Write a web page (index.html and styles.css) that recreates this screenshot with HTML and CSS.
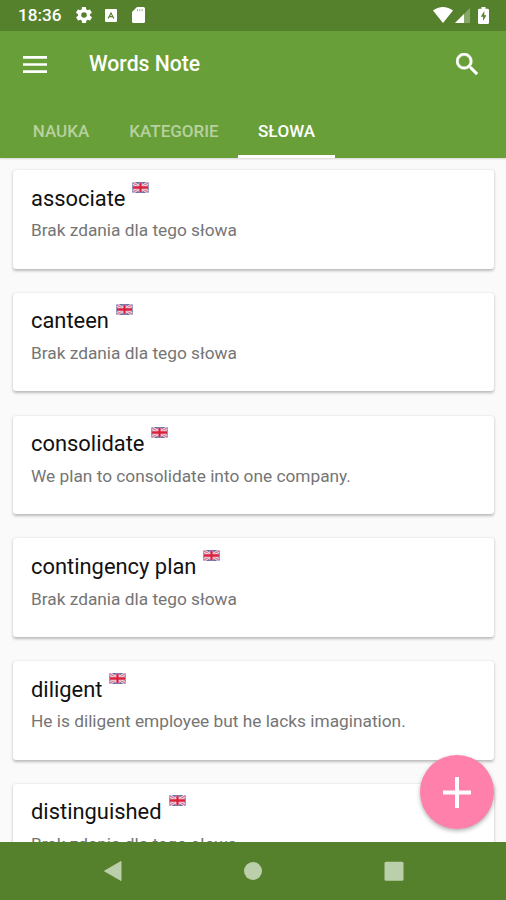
FILE: index.html
```html
<!DOCTYPE html>
<html lang="pl">
<head>
<meta charset="utf-8">
<title>Words Note</title>
<link rel="stylesheet" href="styles.css">
</head>
<body>
<svg width="0" height="0" class="defs">
  <symbol id="flag" viewBox="0 0 18 12">
    <rect width="18" height="12" rx="1.5" fill="#5f70aa"/>
    <path d="M1 1l16 10M17 1L1 11" stroke="#f0d5df" stroke-width="3.400"/>
    <path d="M1 1l16 10M17 1L1 11" stroke="#e0708a" stroke-width="1.3"/>
    <path d="M9 .7v10.6M.7 6h16.6" stroke="#f4dce5" stroke-width="4.200"/>
    <path d="M9 .7v10.6M.7 6h16.6" stroke="#d9213f" stroke-width="2.5"/>
  </symbol>
</svg>
<div class="screen">
  <header class="status">
    <span class="clock">18:36</span>
    <svg class="gear" viewBox="2 2 20 20"><path fill="#fff" fill-rule="evenodd" d="M19.4 13c0-.3.1-.6.1-1s0-.7-.1-1l2.1-1.6c.2-.2.3-.4.1-.7l-2-3.400c-.1-.2-.4-.3-.6-.2l-2.500 1c-.5-.4-1.100-.7-1.700-1l-.4-2.600c0-.3-.2-.5-.5-.5h-4c-.2 0-.4.2-.5.400l-.4 2.700c-.6.2-1.100.6-1.700 1l-2.500-1c-.2-.1-.5 0-.6.2l-2 3.400c-.1.2-.1.5.1.7L4.600 11c0 .3-.1.6-.1 1s0 .7.1 1l-2.100 1.600c-.2.2-.3.400-.1.700l2 3.400c.1.2.4.3.6.2l2.500-1c.5.4 1.100.7 1.700 1l.4 2.600c0 .3.2.5.5.5h4c.2 0 .5-.2.5-.4l.4-2.700c.6-.2 1.100-.6 1.700-1l2.500 1c.2.1.5 0 .6-.2l2-3.400c.1-.2.1-.5-.1-.7zM12 15.500a3.500 3.500 0 1 1 0-7 3.500 3.500 0 0 1 0 7z"/></svg>
    <svg class="app" viewBox="0 0 12 13"><rect width="12" height="13" rx="1" fill="#fff"/><path d="M3.200 9.500L6 4l2.800 5.500M4 7.700h4" fill="none" stroke="#55802c" stroke-width="1.200"/></svg>
    <svg class="card-icon" viewBox="0 0 13 16"><path fill="#fff" d="M5 0h6.500Q13 0 13 1.500v13q0 1.500-1.500 1.500h-10Q0 16 0 14.500V5z"/><path d="M5.500 2v2.300M7.800 2v2.300M10.100 2v2.300" stroke="#9db886"/></svg>
    <span class="grow"></span>
    <svg class="wifi" viewBox="0 0 20 16"><path fill="#fff" d="M0 3.500Q4.500 0 10 0t10 3.500L10 16z"/></svg>
    <svg class="signal" viewBox="0 0 15 15"><path fill="#87a66b" d="M15 0v15H0z"/><path fill="#fff" d="M9 6v9H0z"/></svg>
    <svg class="battery" viewBox="0 0 11 17"><path fill="#fff" d="M3.500 0h4v1.700h2Q11 1.700 11 3v12.700Q11 17 9.500 17h-8Q0 17 0 15.700V3q0-1.300 1.500-1.300h2z"/><path fill="#55802c" d="M6.300 4L2.800 9.800h2.300V14l3.300-5.700H6.300z"/></svg>
  </header>
  <div class="appbar">
    <div class="toolbar">
      <svg class="menu" viewBox="0 0 24 17"><path d="M0 1.400h24M0 8.500h24M0 15.600h24" stroke="#fff" stroke-width="2.600"/></svg>
      <h1>Words Note</h1>
      <svg class="search" viewBox="3 3 17.500 17.500"><path fill="#fff" stroke="#fff" stroke-width=".4" d="M15.500 14h-.79l-.28-.27A6.471 6.471 0 0 0 16 9.500 6.500 6.500 0 1 0 9.500 16c1.610 0 3.090-.59 4.230-1.570l.27.280v.79l5 4.990L20.490 19l-4.990-5zm-6 0C7.010 14 5 11.990 5 9.500S7.010 5 9.500 5 14 7.010 14 9.500 11.990 14 9.500 14z"/></svg>
    </div>
    <nav class="tabs">
      <span class="tab nauka"><b>NAUKA</b></span>
      <span class="tab kategorie"><b>KATEGORIE</b></span>
      <span class="tab slowa active"><b>SŁOWA</b></span>
    </nav>
  </div>
  <main class="list">
    <article class="card"><h2><span>associate</span><svg class="flag"><use href="#flag"/></svg></h2><p>Brak zdania dla tego słowa</p></article>
    <article class="card"><h2><span>canteen</span><svg class="flag"><use href="#flag"/></svg></h2><p>Brak zdania dla tego słowa</p></article>
    <article class="card"><h2><span>consolidate</span><svg class="flag"><use href="#flag"/></svg></h2><p>We plan to consolidate into one company.</p></article>
    <article class="card"><h2><span>contingency plan</span><svg class="flag"><use href="#flag"/></svg></h2><p>Brak zdania dla tego słowa</p></article>
    <article class="card"><h2><span>diligent</span><svg class="flag"><use href="#flag"/></svg></h2><p>He is diligent employee but he lacks imagination.</p></article>
    <article class="card"><h2><span>distinguished</span><svg class="flag"><use href="#flag"/></svg></h2><p>Brak zdania dla tego słowa</p></article>
  </main>
  <div class="fab"><svg viewBox="0 0 28 31"><path d="M14 0v31M0 15.500h28" stroke="#fff" stroke-width="4"/></svg></div>
  <footer class="navbar">
    <svg viewBox="0 0 20 22"><path d="M18 1.500v19L1.500 11z" fill="#bbcfaa" stroke="#bbcfaa" stroke-linejoin="round"/></svg>
    <svg viewBox="0 0 20 22"><circle cx="10" cy="11" r="9" fill="#bbcfaa"/></svg>
    <svg viewBox="0 0 20 22"><rect x=".5" y="1.800" width="19" height="19" rx="1.500" fill="#bbcfaa"/></svg>
  </footer>
</div>
</body>
</html>
```
FILE: styles.css
```css
* { box-sizing: border-box; }
body { margin: 0; font-family: Roboto, "Liberation Sans", sans-serif; }
.defs { position: absolute; }
svg { display: block; flex: none; }
.screen {
  position: relative;
  display: flex;
  flex-direction: column;
  width: 506px;
  height: 900px;
  overflow: hidden;
  background: #fafafa;
}
.status {
  display: flex;
  flex: none;
  height: 30.500px;
  padding: 0 17px 0 18px;
  align-items: center;
  background: #55802c;
}
.clock { width: 58px; color: #fff; font-size: 17.200px; font-weight: 500; }
.gear { width: 16px; height: 16px; }
.app { width: 12px; height: 13px; margin-left: 13px; }
.card-icon { width: 13px; height: 16px; margin-left: 15px; }
.grow { flex: 1; }
.wifi { width: 20px; height: 16px; margin: 0 2px 1px 0; }
.signal { width: 15px; height: 15px; margin: 1px 8px 0 0; }
.battery { width: 11px; height: 17px; }
.appbar { z-index: 1; flex: none; height: 127px; background: #689f38; box-shadow: 0 1px 2px rgba(0, 0, 0, .15); }
.toolbar { display: flex; height: 68px; padding: 0 28.500px 0 23px; align-items: center; }
.menu { width: 24px; height: 17px; }
.toolbar h1 { flex: 1; margin: 0 0 2px 42px; color: #fff; font-size: 21.200px; font-weight: 500; line-height: 26px; }
.search { width: 22px; height: 22px; margin-top: -1px; }
.tabs { display: flex; height: 59px; padding-left: 12px; }
.tab { display: flex; justify-content: center; padding-top: 22px; color: #b7d19f; font-size: 17px; line-height: 20px; }
.tab b { font-weight: 500; }
.nauka { width: 98px; }
.kategorie { width: 128px; }
.slowa { width: 97px; }
.active { color: #fff; border-bottom: 3px solid #fff; }
.list { flex: 1; min-height: 0; padding: 12.500px 12px 0 12.500px; overflow: hidden; }
.card {
  height: 98.500px;
  margin-bottom: 24.300px;
  padding: 13.500px 18.500px;
  border-radius: 3px;
  background: #fff;
  box-shadow: 0 1.500px 3px rgba(0, 0, 0, .25), 0 0 1px rgba(0, 0, 0, .08);
}
.card h2 { display: flex; gap: 7px; margin: 0; color: #111; font-size: 21.900px; font-weight: 400; line-height: 30px; }
.flag { width: 17px; height: 11px; margin-top: -2px; }
.card p { margin: 5.800px 0 0; color: #757575; font-size: 17.300px; line-height: 22px; }
.fab {
  position: absolute;
  right: 12px;
  bottom: 71px;
  display: grid;
  place-items: center;
  width: 74px;
  height: 74px;
  border-radius: 50%;
  background: #ff80ab;
  box-shadow: 0 2px 4px rgba(0, 0, 0, .3);
}
.fab svg { width: 28px; height: 31px; }
.navbar {
  z-index: 1;
  display: flex;
  flex: none;
  height: 58.500px;
  padding: 0 102.500px;
  align-items: center;
  justify-content: space-between;
  background: #55802c;
}
.navbar svg { width: 20px; height: 22px; }
```
